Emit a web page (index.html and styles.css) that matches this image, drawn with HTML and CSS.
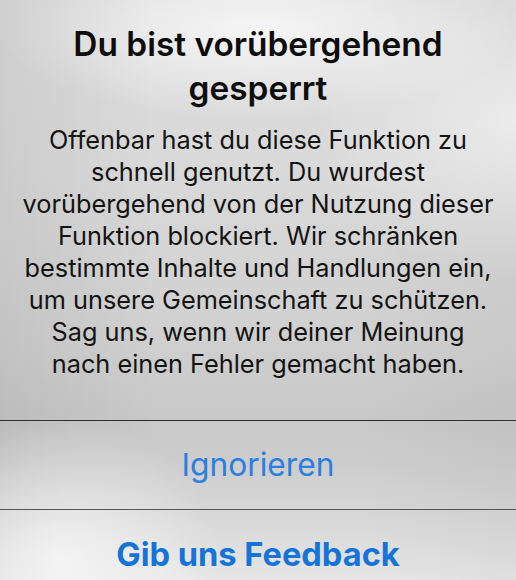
FILE: index.html
```html
<!DOCTYPE html>
<html lang="de">
<head>
<meta charset="utf-8">
<link rel="stylesheet" href="styles.css">
</head>
<body>
<div class="alert">
  <div class="content">
    <h1 class="title">Du bist vorübergehend<br>gesperrt</h1>
    <p class="message">Offenbar hast du diese Funktion zu<br>schnell genutzt. Du wurdest<br>vorübergehend von der Nutzung dieser<br>Funktion blockiert. Wir schränken<br>bestimmte Inhalte und Handlungen ein,<br>um unsere Gemeinschaft zu schützen.<br>Sag uns, wenn wir deiner Meinung<br>nach einen Fehler gemacht haben.</p>
  </div>
  <div class="action action-ignore">Ignorieren</div>
  <div class="action action-feedback">Gib uns Feedback</div>
</div>
</body>
</html>
```
FILE: styles.css
```css
html, body {
  margin: 0;
  padding: 0;
}
body {
  width: 516px;
  height: 580px;
  overflow: hidden;
  font-family: Inter, "Liberation Sans", sans-serif;
  background:
    radial-gradient(ellipse 260px 90px at 258px 30px, rgba(255,255,255,0.75), rgba(255,255,255,0) 100%),
    radial-gradient(ellipse 200px 160px at 516px 120px, rgba(255,255,255,0.55), rgba(255,255,255,0) 100%),
    radial-gradient(ellipse 160px 140px at 60px 560px, rgba(255,255,255,0.7), rgba(255,255,255,0) 100%),
    linear-gradient(to right, rgba(0,0,0,0.06), rgba(0,0,0,0) 30%, rgba(0,0,0,0) 70%, rgba(0,0,0,0.03)),
    linear-gradient(to bottom, #dcdcdc 0%, #d9d9d9 30%, #cfcfcf 60%, #c8c8c8 72%, #cdcdcd 80%, #d6d6d6 88%, #e6e6e6 100%);
}
.alert {
  display: flex;
  flex-direction: column;
}
.content {
  flex-shrink: 0;
  box-sizing: border-box;
  padding: 22px 0 0;
  height: 421px;
  border-bottom: 1px solid #2e2e2e;
  text-align: center;
  color: #0d0d0d;
}
.title {
  margin: 0;
  font-size: 33.4px;
  line-height: 44px;
  font-weight: 600;
}
.message {
  margin: 14px 0 0;
  font-size: 25.3px;
  line-height: 32px;
  font-weight: 400;
  color: #141414;
}
.action {
  flex-shrink: 0;
  text-align: center;
  white-space: nowrap;
}
.action-ignore {
  box-sizing: border-box;
  height: 89px;
  line-height: 88px;
  font-size: 31.7px;
  color: #2a7fe0;
  border-bottom: 1px solid #555;
}
.action-feedback {
  font-size: 32.6px;
  font-weight: 700;
  line-height: 88px;
  color: #1674d9;
}
```
